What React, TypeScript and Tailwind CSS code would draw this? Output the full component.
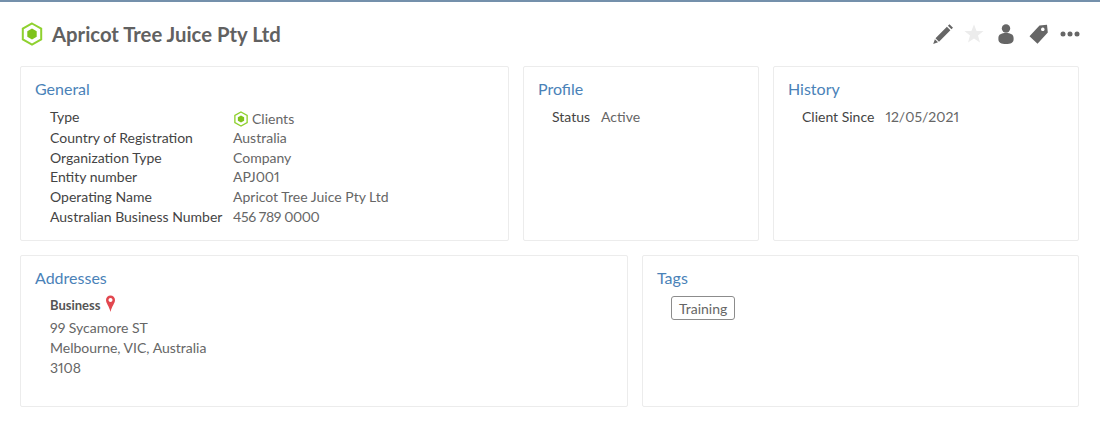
import React from 'react'

const Hexagon = ({ size }: { size: number }) => (
  <svg width={size} height={size} viewBox="0 0 24 24" className="shrink-0">
    <path d="M12 1.500 21.200 6.700V17.300L12 22.500 2.800 17.300V6.700Z" fill="none" stroke="#8fd12f" strokeWidth="2" />
    <path d="M12 6.600 16.700 9.300V14.700L12 17.400 7.300 14.700V9.300Z" fill="#7fc31c" />
  </svg>
)

const Card = ({ title, className, children }: { title: string; className: string; children?: React.ReactNode }) => (
  <div className={`border border-[#ececec] rounded-[2px] bg-white pl-[14px] pt-[12px] ${className}`}>
    <h3 className="text-[16px] leading-[20px] text-[#4a82b8]">{title}</h3>
    {children}
  </div>
)

const general: [string, React.ReactNode][] = [
  ['Type', <span className="flex items-center gap-[3px] pt-[2px]"><Hexagon size={16} />Clients</span>],
  ['Country of Registration', 'Australia'],
  ['Organization Type', 'Company'],
  ['Entity number', 'APJ001'],
  ['Operating Name', 'Apricot Tree Juice Pty Ltd'],
  ['Australian Business Number', <span className="tracking-[-0.4px]">456 789 0000</span>],
]

export default function App() {
  return (
    <div className="h-[426px] w-[1100px] bg-white font-['Lato',sans-serif] text-[14px] text-[#666] border-t-2 border-[#7490ab] [font-variant-numeric:proportional-nums]">
      <div className="flex h-[64px] items-center justify-between pl-[20px] pr-[20px]">
        <div className="flex items-center gap-[8px]">
          <Hexagon size={24} />
          <h1 className="text-[20.300px] font-bold text-[#616161]">Apricot Tree Juice Pty Ltd</h1>
        </div>
        <div className="flex items-center text-[#666]">
          <svg width="22" height="22" viewBox="0 0 22 22">
            <path d="M17.500 1.200 21 4.700 19.400 6.300 15.900 2.800ZM14.900 3.800 18.400 7.300 7 18.700 3.500 15.200ZM2.900 16.200 6 19.300 1.200 21Z" fill="#666" />
          </svg>
          <svg width="20" height="22" viewBox="0 0 20 22" className="ml-[10px]">
            <path d="M10 1.500 12.600 8H19.600L14 12.400 16 19.600 10 15.400 4 19.600 6 12.400 .4 8H7.400Z" fill="#ececec" />
          </svg>
          <svg width="16" height="22" viewBox="0 0 16 22" className="ml-[14px]">
            <circle cx="8" cy="5.500" r="4.200" fill="#666" />
            <path d="M.4 15c0-3.600 3-5 7.600-5s7.600 1.400 7.600 5v1.500c0 3.200-3 4.500-7.600 4.500s-7.600-1.300-7.600-4.500Z" fill="#666" />
          </svg>
          <svg width="19" height="22" viewBox="0 0 19 22" className="ml-[15px]">
            <path fillRule="evenodd" d="M10.500 2.400 18 1.800 18.800 9.500 8.500 20.800 .5 13.200ZM13.800 4.500a1.800 1.800 0 1 0 .01 0Z" fill="#666" />
          </svg>
          <svg width="20" height="22" viewBox="0 0 20 22" className="ml-[12px]">
            <circle cx="3" cy="11" r="2.500" fill="#666" />
            <circle cx="10" cy="11" r="2.500" fill="#666" />
            <circle cx="17" cy="11" r="2.500" fill="#666" />
          </svg>
        </div>
      </div>

      <div className="flex flex-col gap-[14px] pl-[20px]">
        <div className="flex gap-[14px] h-[175px]">
          <Card title="General" className="w-[489px]">
            <div className="mt-[8px] ml-[15px] grid grid-cols-[183px_1fr] grid-rows-[21px_20px_19px_20px_20px_20px] leading-[19.800px]">
              {general.map(([label, value]) => (
                <React.Fragment key={label}>
                  <span className="text-[#444]">{label}</span>
                  <span>{value}</span>
                </React.Fragment>
              ))}
            </div>
          </Card>
          <Card title="Profile" className="w-[236px]">
            <div className="mt-[8px] ml-[14px] flex gap-[11px] leading-[19.800px]">
              <span className="text-[#444]">Status</span>
              <span>Active</span>
            </div>
          </Card>
          <Card title="History" className="w-[306px]">
            <div className="mt-[8px] ml-[14px] flex gap-[11px] leading-[19.800px]">
              <span className="text-[#444]">Client Since</span>
              <span>12/05/2021</span>
            </div>
          </Card>
        </div>
        <div className="flex gap-[14px] h-[152px]">
          <Card title="Addresses" className="w-[608px]">
            <div className="mt-[7px] ml-[15px] leading-[20px]">
              <div className="flex items-center gap-[4px] text-[13px] font-bold text-[#555]">
                Business
                <svg width="11" height="18" viewBox="0 0 11 18" className="-mt-[2px]">
                  <path fillRule="evenodd" d="M5.500 .5a4.500 4.500 0 0 1 4.500 4.500c0 3.500-3 5.500-4.500 12-1.500-6.500-4.500-8.500-4.500-12a4.500 4.500 0 0 1 4.500-4.500ZM5.500 3a2 2 0 1 0 .01 0Z" fill="#e2474f" />
                </svg>
              </div>
              <div className="mt-[3px]">99 Sycamore ST</div>
              <div>Melbourne, VIC, Australia</div>
              <div>3108</div>
            </div>
          </Card>
          <Card title="Tags" className="w-[437px]">
            <div className="mt-[8px] ml-[14px]">
              <span className="inline-block h-[24px] rounded-[3px] border border-[#8c8c8c] px-[7px] leading-[24px]">Training</span>
            </div>
          </Card>
        </div>
      </div>
    </div>
  )
}
